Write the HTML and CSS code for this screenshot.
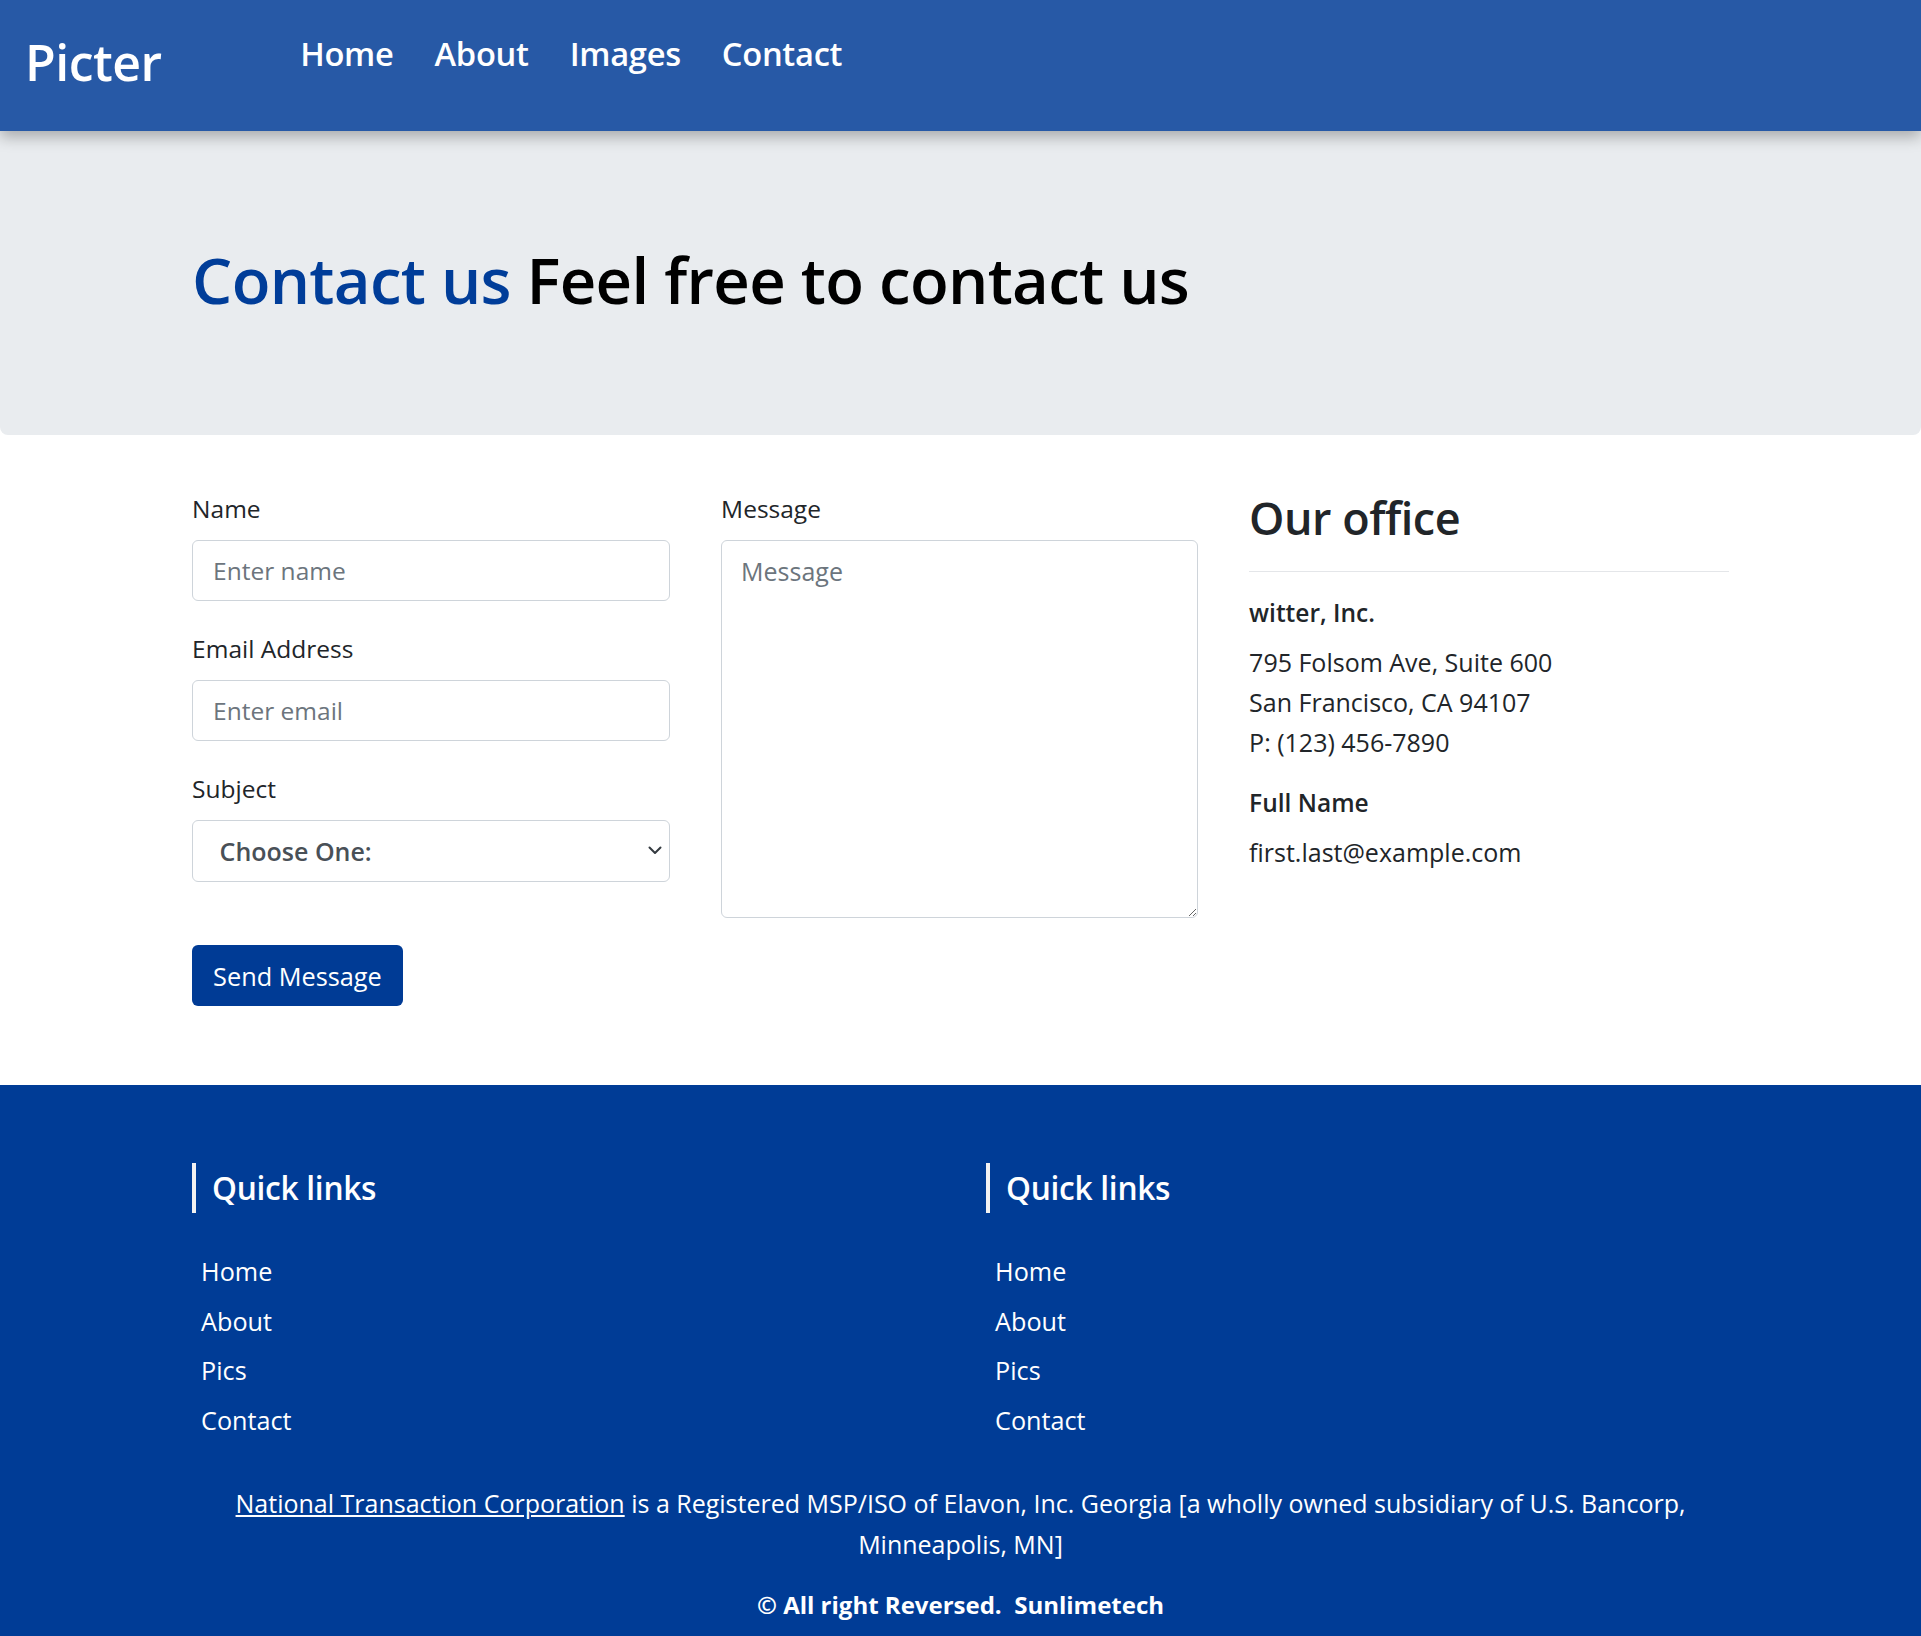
FILE: index.html
```html
<!DOCTYPE html>
<html lang="en">
<head>
<meta charset="utf-8">
<title>Picter - Contact</title>
<link rel="stylesheet" href="styles.css">
</head>
<body>
<header class="navbar">
  <a class="brand" href="#">Picter</a>
  <ul class="nav">
    <li><a href="#">Home</a></li>
    <li><a href="#">About</a></li>
    <li><a href="#">Images</a></li>
    <li><a href="#">Contact</a></li>
  </ul>
</header>

<section class="hero">
  <div class="container">
    <h1 class="hero-title"><span class="accent">Contact us</span> Feel free to contact us</h1>
  </div>
</section>

<main class="container main">
  <form class="form-col">
    <div class="group">
      <label class="label" for="name">Name</label>
      <input class="field" id="name" type="text" placeholder="Enter name">
    </div>
    <div class="group">
      <label class="label" for="email">Email Address</label>
      <input class="field" id="email" type="email" placeholder="Enter email">
    </div>
    <div class="group">
      <label class="label" for="subject">Subject</label>
      <div class="select-wrap">
        <select class="field select" id="subject">
          <option>Choose One:</option>
          <option>General</option>
          <option>Support</option>
        </select>
        <svg class="chevron" width="14" height="9" viewBox="0 0 14 9"><path d="M1.5 1.5l5.5 5.5 5.5-5.5" fill="none" stroke="#343a40" stroke-width="2" stroke-linecap="round" stroke-linejoin="round"/></svg>
      </div>
    </div>
    <button class="btn" type="button">Send Message</button>
  </form>

  <div class="message-col">
    <label class="label" for="msg">Message</label>
    <textarea class="field textarea" id="msg" placeholder="Message"></textarea>
  </div>

  <div class="office-col">
    <h2 class="office-title">Our office</h2>
    <hr class="divider">
    <p class="company">witter, Inc.</p>
    <address class="address">
      795 Folsom Ave, Suite 600<br>
      San Francisco, CA 94107<br>
      P: (123) 456-7890
    </address>
    <p class="company">Full Name</p>
    <p class="address email">first.last@example.com</p>
  </div>
</main>

<footer class="footer">
  <div class="footer-cols">
    <div class="footer-col">
      <h3 class="footer-title">Quick links</h3>
      <ul class="footer-links">
        <li><a href="#">Home</a></li>
        <li><a href="#">About</a></li>
        <li><a href="#">Pics</a></li>
        <li><a href="#">Contact</a></li>
      </ul>
    </div>
    <div class="footer-col">
      <h3 class="footer-title">Quick links</h3>
      <ul class="footer-links">
        <li><a href="#">Home</a></li>
        <li><a href="#">About</a></li>
        <li><a href="#">Pics</a></li>
        <li><a href="#">Contact</a></li>
      </ul>
    </div>
  </div>
  <p class="legal"><a href="#">National Transaction Corporation</a> is a Registered MSP/ISO of Elavon, Inc. Georgia [a wholly owned subsidiary of U.S. Bancorp,<br>Minneapolis, MN]</p>
  <p class="copyright">© All right Reversed.&nbsp; Sunlimetech</p>
</footer>
</body>
</html>
```

FILE: styles.css
```css
* { box-sizing: border-box; }

html, body {
  margin: 0;
  padding: 0;
}

body {
  font-family: "Open Sans", "Noto Sans", "Liberation Sans", sans-serif;
  font-size: 24px;
  line-height: 1.5;
  color: #212529;
  background: #fff;
}

a { text-decoration: none; color: inherit; }

.container {
  width: 80%;
  margin: 0 auto;
}

/* Navbar */
.navbar {
  position: relative;
  z-index: 2;
  height: 131px;
  background: #2759a6;
  display: flex;
  align-items: flex-start;
  padding: 0 0 0 25px;
  box-shadow: 0 6px 14px rgba(0, 0, 0, 0.28);
}

.brand {
  color: #fff;
  font-size: 50px;
  font-weight: 600;
  line-height: 60px;
  padding-top: 32px;
  letter-spacing: -0.5px;
}

.nav {
  list-style: none;
  margin: 0 0 0 118px;
  padding: 35px 0 0;
  display: flex;
}

.nav a {
  display: block;
  color: #fff;
  font-size: 32.7px;
  font-weight: 600;
  line-height: 38px;
  padding: 0 20.5px;
  letter-spacing: -0.3px;
}

/* Hero */
.hero {
  position: relative;
  z-index: 1;
  height: 304px;
  background: #e9ecef;
  border-radius: 0 0 8px 8px;
  padding-top: 113px;
}

.hero-title {
  margin: 0;
  font-size: 63.5px;
  font-weight: 600;
  line-height: 72px;
  color: #000;
  letter-spacing: -0.7px;
}

.accent { color: #003d99; }

/* Main */
.main {
  display: grid;
  grid-template-columns: 478px 477px 1fr;
  column-gap: 51px;
  padding-top: 55px;
  padding-bottom: 79px;
  align-items: start;
}

.group { margin-bottom: 29px; }

.label {
  display: block;
  font-size: 24.5px;
  line-height: 37px;
  margin-bottom: 13px;
  color: #212529;
}

.field {
  display: block;
  width: 100%;
  height: 61px;
  padding: 0 20px;
  font-family: inherit;
  font-size: 24.5px;
  color: #495057;
  background: #fff;
  border: 1.5px solid #ced4da;
  border-radius: 6px;
  outline: none;
}

.field::placeholder { color: #6c757d; }

.select-wrap { position: relative; }

.select {
  appearance: none;
  -webkit-appearance: none;
  padding-left: 26.5px;
  font-size: 25px;
  font-weight: 600;
  color: #495057;
  height: 62px;
}

.chevron {
  position: absolute;
  right: 8px;
  top: 26px;
  pointer-events: none;
}

.btn {
  display: block;
  margin-top: 63px;
  height: 61px;
  padding: 0 21px;
  background: #003b95;
  color: #fff;
  border: none;
  border-radius: 6px;
  font-family: inherit;
  font-size: 25.3px;
}

.textarea {
  height: 378px;
  padding: 12px 19px;
  resize: vertical;
  font-size: 25px;
  line-height: 1.5;
}

/* Office */
.office-title {
  margin: 0;
  font-size: 45px;
  font-weight: 600;
  line-height: 55px;
  color: #212529;
  letter-spacing: -0.5px;
}

.divider {
  border: 0;
  border-top: 1.5px solid #e4e6e9;
  margin: 26px 0 25px;
}

.company {
  margin: 0 0 13px;
  font-size: 24.5px;
  font-weight: 600;
  line-height: 32px;
}

.address {
  font-style: normal;
  font-size: 25px;
  line-height: 40px;
  margin: 0 0 25px;
}

.email { margin: 0; }

/* Footer */
.footer {
  background: #003c96;
  color: #fff;
  padding: 78px 0 20px;
}

.footer-cols {
  display: grid;
  grid-template-columns: 794px 1fr;
  width: 80%;
  margin: 0 auto;
}

.footer-title {
  margin: 0;
  border-left: 4px solid #f2f2f2;
  padding-left: 16px;
  font-size: 31.7px;
  font-weight: 600;
  line-height: 50px;
  letter-spacing: -0.3px;
}

.footer-links {
  list-style: none;
  margin: 34px 0 0;
  padding: 0 0 0 9px;
}

.footer-links li {
  font-size: 25.2px;
  line-height: 49.5px;
}

.legal {
  margin: 38px auto 0;
  width: 80%;
  text-align: center;
  font-size: 25px;
  line-height: 41px;
}

.legal a { text-decoration: underline; }

.copyright {
  margin: 19px 0 0;
  text-align: center;
  font-size: 24px;
  font-weight: 700;
  line-height: 42px;
}
```
